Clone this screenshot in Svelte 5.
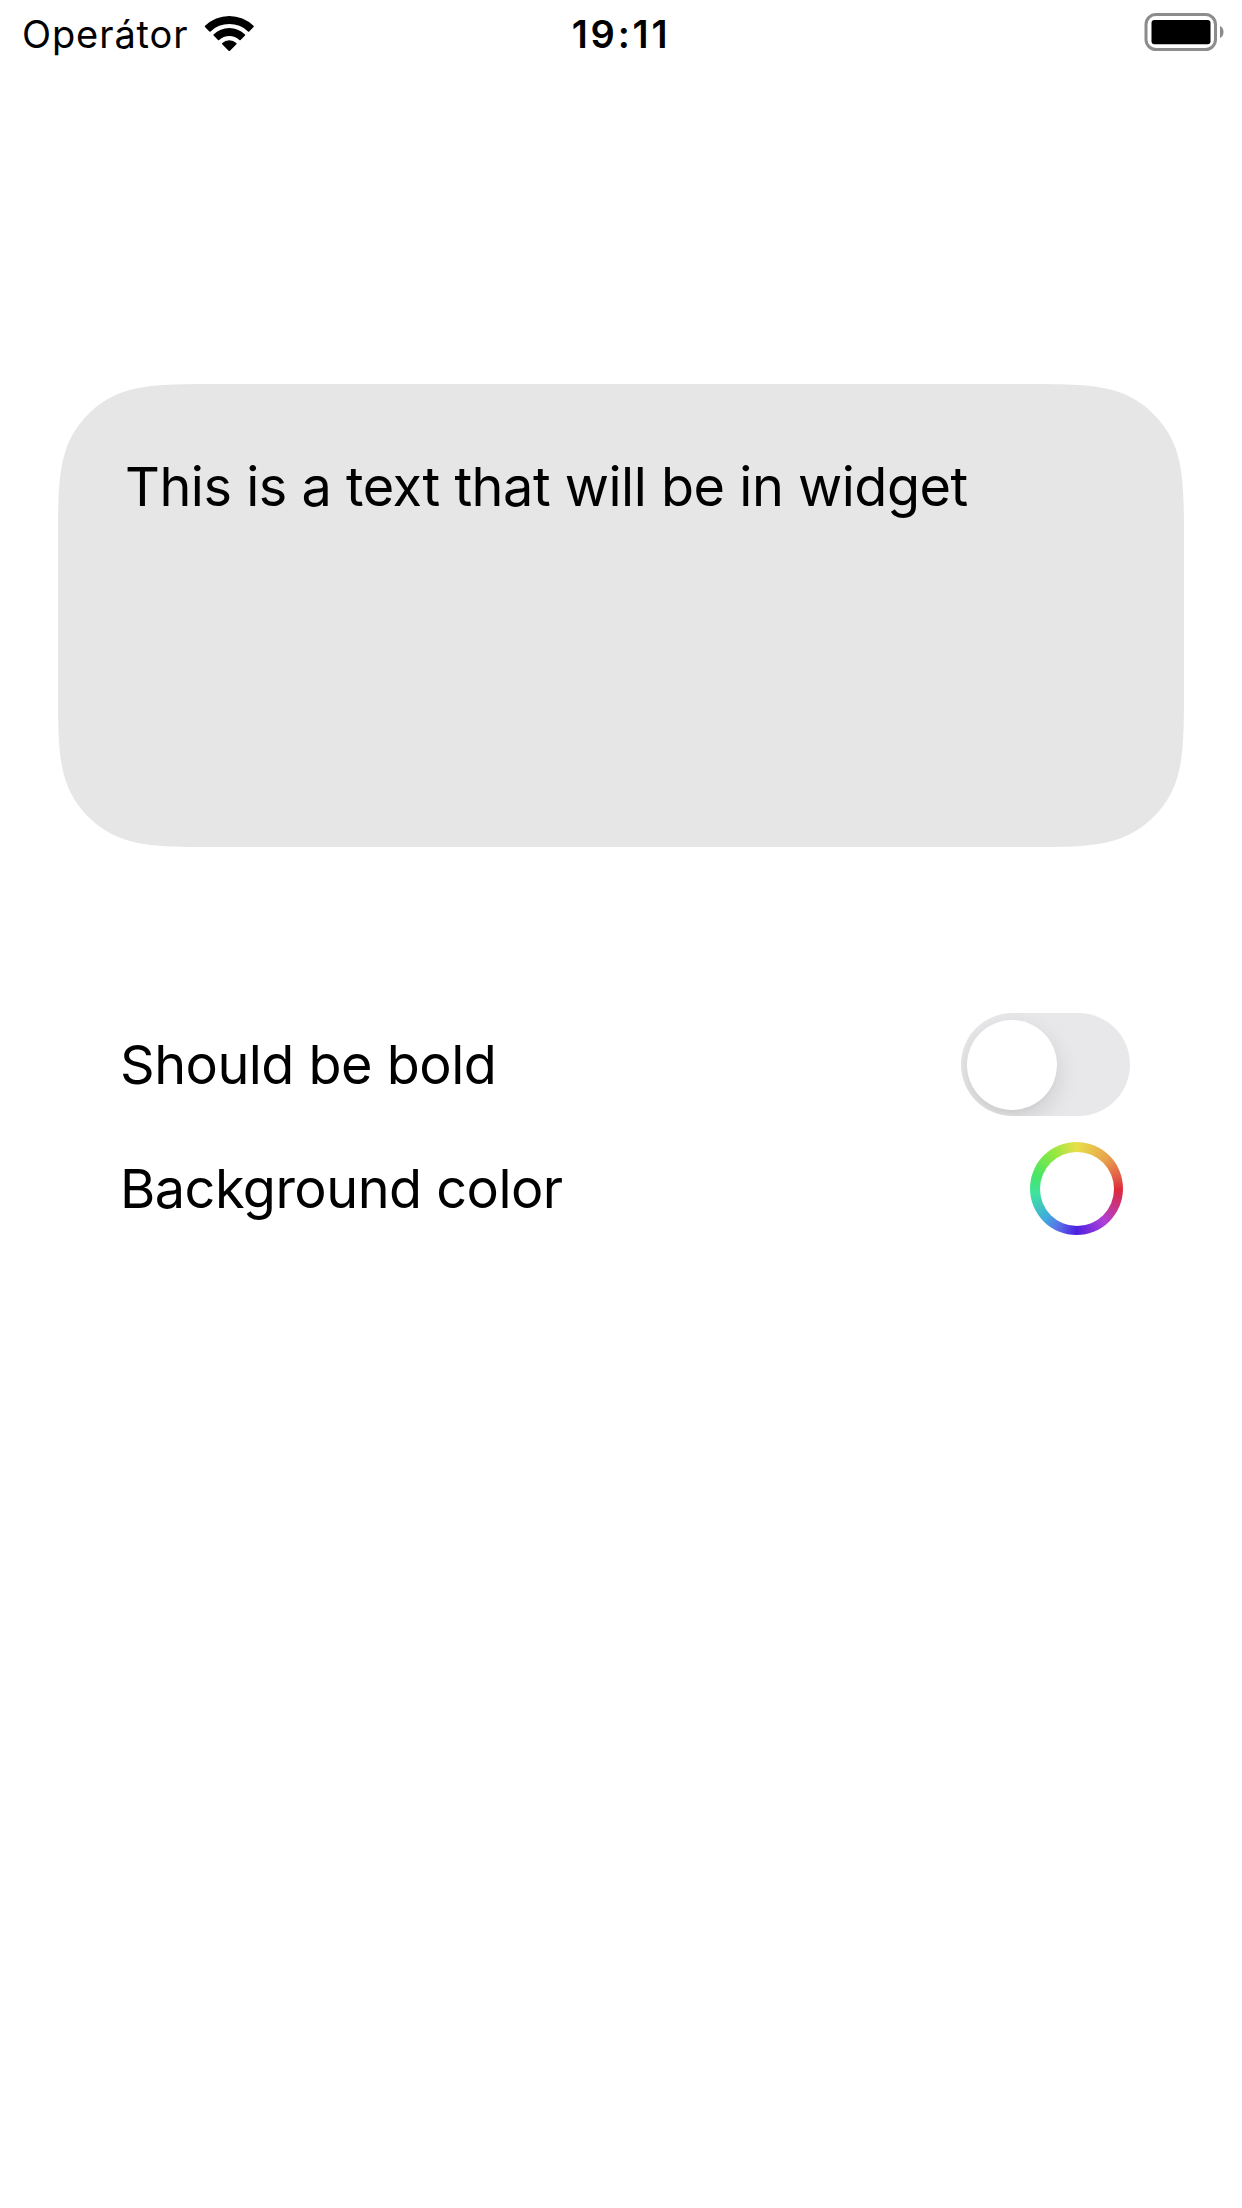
<script>
  let text = $state('This is a text that will be in widget');
  let bold = $state(false);
</script>

<main class="screen">
  <header class="status">
    <div class="carrier">
      <span class="operator">Operátor</span>
      <svg class="wifi" viewBox="0 0 50 38" aria-hidden="true">
        <path d="M1 13Q0.5 12.4 1.1 11.8A34.5 34.5 0 0 1 49.5 11.8Q50.1 12.4 49.6 13L45.2 17.4Q44.6 18 44 17.4A27 27 0 0 0 6.6 17.4Q6 18 5.4 17.4Z" />
        <path d="M9.6 21.6Q9 21 9.6 20.4A22.6 22.6 0 0 1 41 20.4Q41.6 21 41 21.6L36.6 26Q36 26.6 35.4 26A15 15 0 0 0 15.2 26Q14.6 26.6 14 26Z" />
        <path d="M18.2 30.2Q17.6 29.6 18.3 29A10.6 10.6 0 0 1 32.3 29Q33 29.6 32.4 30.2L26 36.7Q25.3 37.4 24.6 36.7Z" />
      </svg>
    </div>
    <time class="clock">19:11</time>
    <svg class="battery" viewBox="0 0 80 38" aria-hidden="true">
      <rect class="shell" x="2" y="1.5" width="69.5" height="35" rx="10" />
      <rect x="7.5" y="7" width="59" height="24.3" rx="3" />
      <path class="tip" d="M76 13Q79.5 14.5 79.5 19T76 25Z" />
    </svg>
  </header>

  <section class="card">
    <svg class="shape" viewBox="0 0 1126 463" aria-hidden="true">
      <path d="M162 0H964C1010 0 1038.6 0 1062.2 8.6C1087.2 17.7 1108.3 38.8 1117.4 63.8C1126 87.4 1126 116 1126 162V301C1126 347 1126 375.6 1117.4 399.2C1108.3 424.2 1087.2 445.3 1062.2 454.4C1038.6 463 1010 463 964 463H162C116 463 87.4 463 63.8 454.4C38.8 445.3 17.7 424.2 8.6 399.2C0 375.6 0 347 0 301V162C0 116 0 87.4 8.6 63.8C17.7 38.8 38.8 17.7 63.8 8.6C87.4 0 116 0 162 0Z" />
    </svg>
    <p class="preview" class:bold>{text}</p>
  </section>

  <section class="settings">
    <div class="row toggle-row">
      <span class="label">Should be bold</span>
      <button class="switch" class:on={bold} aria-label="Should be bold" onclick={() => (bold = !bold)}>
        <span class="thumb"></span>
      </button>
    </div>
    <div class="row color-row">
      <span class="label">Background color</span>
      <button class="well" aria-label="Background color"><span class="swatch"></span></button>
    </div>
  </section>
</main>

<style>
  :global(body) {
    margin: 0;
    background: #fff;
  }
  .screen {
    box-sizing: border-box;
    width: 1242px;
    height: 2208px;
    overflow: hidden;
    background: #fff;
    color: #000;
    font-family: Inter, 'Liberation Sans', sans-serif;
  }
  .status {
    box-sizing: border-box;
    display: grid;
    grid-template-columns: 1fr auto 1fr;
    align-items: start;
    height: 60px;
    padding: 13px 18px 0;
  }
  .carrier {
    display: flex;
    align-items: flex-start;
    gap: 15px;
    padding-left: 4px;
  }
  .operator,
  .clock {
    font-size: 38px;
    line-height: 42px;
    white-space: nowrap;
  }
  .operator {
    width: 167px;
    letter-spacing: 0.9px;
  }
  .clock {
    font-weight: 600;
    letter-spacing: 2.8px;
  }
  .wifi {
    width: 50px;
    height: 38px;
    margin-top: 1px;
  }
  .battery {
    justify-self: end;
    width: 80px;
    height: 38px;
  }
  .shell {
    fill: none;
    stroke: #8c8c8c;
    stroke-width: 3;
  }
  .tip {
    fill: #8c8c8c;
  }
  .card {
    display: grid;
    width: 1126px;
    height: 463px;
    margin: 324px 0 0 58px;
  }
  .shape,
  .preview {
    grid-area: 1 / 1;
  }
  .shape {
    width: 1126px;
    height: 463px;
  }
  .shape path {
    fill: #e6e6e6;
  }
  .preview {
    margin: 0;
    padding: 70px 0 0 67px;
    font-size: 54px;
    line-height: 66px;
    letter-spacing: -0.48px;
    white-space: nowrap;
  }
  .bold {
    font-weight: 700;
  }
  .settings {
    display: flex;
    flex-direction: column;
    gap: 26px;
    margin: 166px 112.5px 0 120px;
  }
  .row {
    display: flex;
    align-items: center;
    justify-content: space-between;
  }
  .toggle-row {
    height: 103px;
  }
  .color-row {
    height: 93px;
  }
  .label {
    font-size: 54px;
    line-height: 66px;
    letter-spacing: -0.52px;
    white-space: nowrap;
  }
  button {
    border: 0;
    margin: 0;
  }
  .switch {
    box-sizing: border-box;
    display: flex;
    align-items: center;
    width: 169px;
    height: 103px;
    padding: 0 6.5px;
    border-radius: 52px;
    overflow: hidden;
    background: #e8e8ea;
  }
  .switch.on {
    justify-content: flex-end;
    background: #34c759;
  }
  .thumb {
    width: 90px;
    height: 90px;
    border-radius: 50%;
    background: #fff;
    box-shadow: 0 9px 24px rgba(0, 0, 0, 0.12), 0 3px 3px rgba(0, 0, 0, 0.02);
  }
  .well {
    box-sizing: border-box;
    width: 93px;
    height: 93px;
    padding: 9.5px;
    margin-right: 6.5px;
    border-radius: 50%;
    background: conic-gradient(#e8e04a, #e8a24c 45deg, #e25a48 75deg, #dc2a3a 92deg, #b040d6 140deg, #4c20e0 180deg, #5a6ee8 205deg, #41a8e0 225deg, #3fe2a0 262deg, #48e566 288deg, #8ee840 325deg, #e8e04a);
  }
  .swatch {
    display: block;
    width: 74px;
    height: 74px;
    border-radius: 50%;
    background: #fff;
  }
</style>
